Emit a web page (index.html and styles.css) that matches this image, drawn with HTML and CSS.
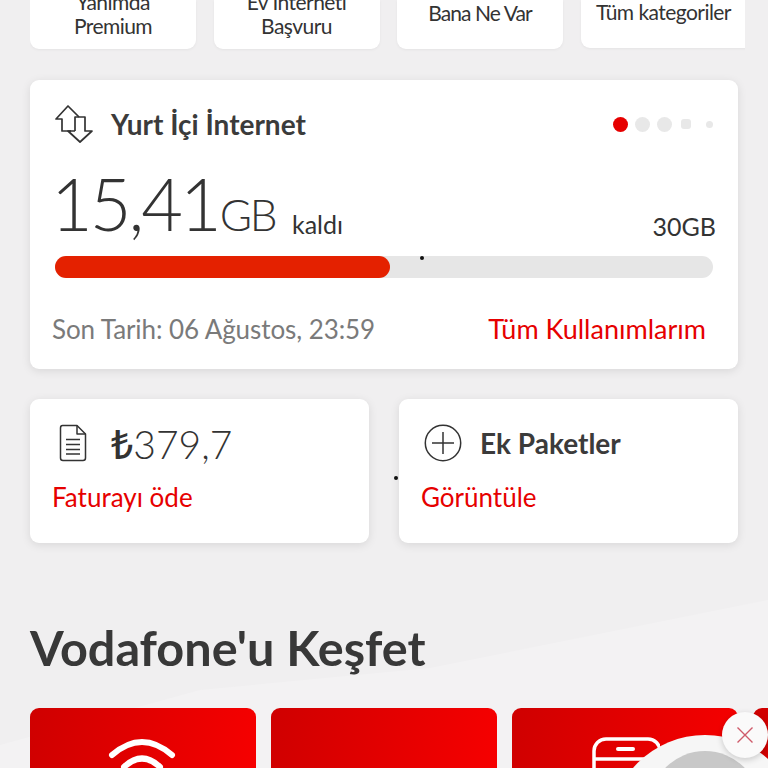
FILE: index.html
```html
<!DOCTYPE html>
<html lang="tr">
<head>
<meta charset="utf-8">
<title>Vodafone</title>
<link rel="stylesheet" href="styles.css">
</head>
<body>
<svg class="bg-art" width="768" height="768" viewBox="0 0 768 768"><path d="M0 745 L200 690 L430 668 L768 600 L768 768 L0 768Z" fill="#f3f2f3"/></svg>
<main class="page">
  <section class="shortcuts">
    <div class="shortcut"><span>Yanımda<br>Premium</span></div>
    <div class="shortcut"><span>Ev İnterneti<br>Başvuru</span></div>
    <div class="shortcut single tight"><span>Bana Ne Var</span></div>
    <div class="shortcut single last"><span>Tüm kategoriler</span></div>
  </section>

  <section class="card usage">
    <div class="usage-head">
      <svg class="ico-arrows" width="38" height="38" viewBox="0 0 38 38" fill="none" stroke="#333" stroke-width="1.7" stroke-linejoin="round"><path d="M16 26 H7 V14 H1 L13 1 L24 12"/><path d="M20 26 V12 H30 V26 H37 L25 37 L13 26 H20"/></svg>
      <h2 class="usage-title">Yurt İçi İnternet</h2>
      <div class="dots"><i class="dot on"></i><i class="dot"></i><i class="dot"></i><i class="dot sm"></i><i class="dot xs"></i></div>
    </div>
    <div class="usage-values">
      <span class="remaining"><span class="big">15,41</span><span class="unit">GB</span><span class="left">kaldı</span></span>
      <span class="total">30GB</span>
    </div>
    <div class="track"><div class="fill"></div></div>
    <div class="usage-foot"><span class="date">Son Tarih: 06 Ağustos, 23:59</span><a class="link">Tüm Kullanımlarım</a></div>
  </section>

  <section class="pair">
    <div class="card mini">
      <div class="mini-head">
        <svg class="ico-doc" width="28" height="38" viewBox="0 0 28 38" fill="none" stroke="#333" stroke-width="1.5" stroke-linejoin="round"><path d="M3.5 1.5 H18 L26.5 10 V34 Q26.5 36.5 24 36.5 H4 Q1.5 36.5 1.5 34 V4 Q1.5 1.5 3.5 1.5Z"/><path d="M18 1.5 V10 H26.5"/><path d="M7 15.5 H21 M7 20.5 H21 M7 25.5 H21 M7 30 H21"/></svg>
        <span class="amount"><b class="tl">₺</b>379,7</span>
      </div>
      <a class="link small">Faturayı öde</a>
    </div>
    <div class="card mini">
      <div class="mini-head">
        <svg class="ico-plus" width="38" height="38" viewBox="0 0 38 38" fill="none" stroke="#333" stroke-width="1.5"><circle cx="19" cy="19" r="17.7"/><path d="M19 8 V30 M8 19 H30"/></svg>
        <h3 class="mini-title">Ek Paketler</h3>
      </div>
      <a class="link small">Görüntüle</a>
    </div>
  </section>

  <h1 class="discover">Vodafone'u Keşfet</h1>

  <section class="tiles">
    <div class="tile"><svg width="70" height="60" viewBox="0 0 70 60" fill="none" stroke="#fff" stroke-width="6" stroke-linecap="round"><path d="M4 18 Q34 -8 64 18"/><path d="M16 30 Q34 13 52 30"/><path d="M27 42 Q34 36 41 42"/></svg></div>
    <div class="tile"></div>
    <div class="tile"><svg class="ico-card" width="70" height="60" viewBox="0 0 70 60" fill="none" stroke="#fff" stroke-width="3.5"><rect x="4" y="2" width="66" height="70" rx="12"/><path d="M4 22 H70"/><path d="M28 12 H43" stroke-width="4" stroke-linecap="round"/></svg></div>
    <div class="tile"></div>
  </section>
</main>
<i class="speck speck-a"></i>
<i class="speck speck-b"></i>
<div class="float-disc"></div>
<div class="float-inner"></div>
<button class="float-close" aria-label="Kapat"><svg width="18" height="18" viewBox="0 0 18 18" stroke="#cf5a6a" stroke-width="1.4"><path d="M1.5 1.5 L16.5 16.5 M16.5 1.5 L1.5 16.5"/></svg></button>
</body>
</html>
```
FILE: styles.css
```css
* { box-sizing: border-box; }
html, body { margin: 0; height: 768px; overflow: hidden; }
body { width: 768px; background: #f0eff0; font-family: Lato, "Noto Sans", sans-serif; color: #333; position: relative; }
.bg-art { position: absolute; left: 0; top: 0; }
.page { position: relative; padding-left: 30px; display: flex; flex-direction: column; height: 768px; overflow: hidden; }

.shortcuts { display: flex; gap: 17.5px; height: 54px; width: 715px; overflow: hidden; flex: none; margin-bottom: -4px; }
.shortcut { flex: none; width: 166px; height: 49px; background: #fff; border-radius: 0 0 9px 9px; display: flex; flex-direction: column; justify-content: flex-end; align-items: center; text-align: center; font-size: 21px; line-height: 24px; letter-spacing: -.55px; padding-bottom: 11px; color: #333; box-shadow: 0 1px 3px rgba(0,0,0,.05); }
.shortcut.single { padding-bottom: 24px; }
.shortcut.tight { letter-spacing: -.9px; }
.shortcut.last { height: 48px; border-radius: 0 0 0 9px; }

.card { background: #fff; border-radius: 9px; box-shadow: 0 2px 10px rgba(0,0,0,.1); }
.usage { margin-top: 30px; width: 708px; height: 289px; padding: 25px 22px 0 25px; display: flex; flex-direction: column; flex: none; }
.usage-head { display: flex; align-items: center; height: 38px; flex: none; }
.usage-title { margin: 0 0 0 18px; font-size: 28px; line-height: 38px; font-weight: 700; color: #3b3b3b; }
.dots { margin-left: auto; display: flex; align-items: center; gap: 7px; padding-right: 3px; }
.dot { width: 15px; height: 15px; border-radius: 50%; background: #e8e8e8; }
.dot.on { background: #e60000; }
.dot.sm { width: 10px; height: 10px; border-radius: 3px; margin: 0 5px 0 2px; }
.dot.xs { width: 7px; height: 7px; margin-left: 3px; }

.usage-values { display: flex; align-items: flex-end; justify-content: space-between; height: 50px; margin-top: 57px; white-space: nowrap; flex: none; }
.remaining { line-height: 50px; margin-left: -4px; }
.big { font-size: 72px; letter-spacing: -3px; font-weight: 300; color: #333; }
.unit { font-size: 44px; letter-spacing: -2.5px; font-weight: 300; margin-left: 1px; }
.left { font-size: 25px; margin-left: 17px; vertical-align: -3px; }
.total { font-size: 25px; line-height: 34px; padding-bottom: 7px; }

.track { margin-top: 6px; height: 22px; width: 658px; background: #e6e6e6; border-radius: 11px; flex: none; }
.fill { width: 335px; height: 22px; background: #e42100; border-radius: 11px; }
.usage-foot { display: flex; justify-content: space-between; align-items: center; margin-top: 34px; margin-left: -3px; padding-right: 10px; height: 34px; flex: none; }
.date { font-size: 26px; letter-spacing: -.08px; color: #7a7a7a; }
.link { font-size: 27px; color: #e60000; line-height: 34px; }
.link.small { font-size: 26px; }

.pair { display: flex; gap: 30px; margin-top: 30px; width: 708px; flex: none; }
.mini { flex: 1; height: 144px; padding: 25px 22px 0 22px; }
.mini-head { display: flex; align-items: center; height: 38px; margin-bottom: 18px; }
.ico-doc { margin: 0 24px 0 7px; }
.amount { font-size: 39px; font-weight: 300; color: #333; }
.tl { font-family: "Noto Sans", sans-serif; font-weight: 500; }
.ico-plus { margin: 0 18px 0 3px; }
.mini-title { margin: 0; font-size: 28px; font-weight: 700; color: #3b3b3b; }

.discover { margin: 74px 0 0; font-size: 48.6px; line-height: 60px; font-weight: 700; color: #383838; height: 60px; flex: none; }
.tiles { display: flex; gap: 15px; margin-top: 31px; flex: none; width: 738px; overflow: hidden; }
.tile { flex: none; width: 226px; height: 120px; border-radius: 9px; background: linear-gradient(100deg, #cf0000, #f80000); display: flex; justify-content: center; padding-top: 29px; }
.tile svg { display: block; }

.speck { position: absolute; width: 4px; height: 4px; background: #111; border-radius: 50%; }
.speck-a { left: 420px; top: 256px; }
.speck-b { left: 394px; top: 476px; }
.float-disc { position: absolute; left: 610px; top: 735px; width: 190px; height: 190px; border-radius: 50%; background: #f6f6f6; }
.float-inner { position: absolute; left: 650px; top: 751px; width: 110px; height: 110px; border-radius: 50%; background: #c8c8c8; }
.float-close { position: absolute; left: 722px; top: 712px; width: 46px; height: 46px; padding: 0; border: 0; border-radius: 50%; background: #fafafa; box-shadow: 0 2px 6px rgba(0,0,0,.18); display: flex; align-items: center; justify-content: center; }
```
